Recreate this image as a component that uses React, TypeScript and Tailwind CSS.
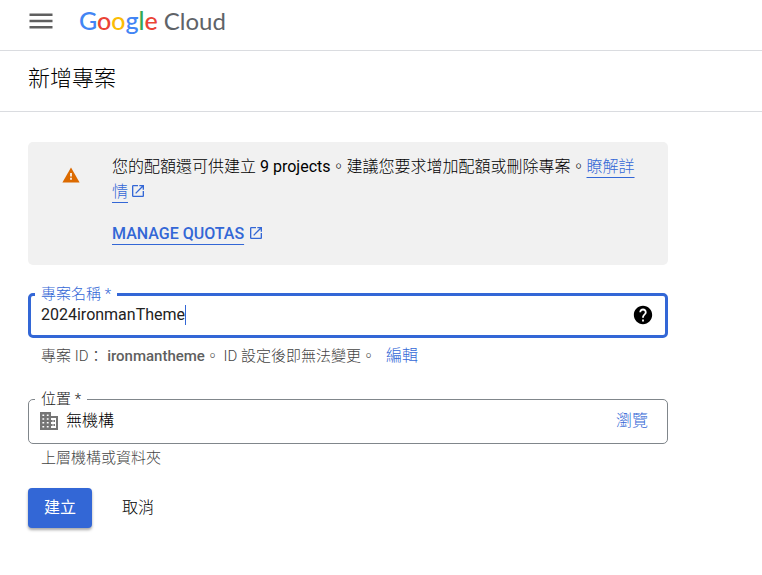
import { MdHelp, MdOpenInNew } from 'react-icons/md';

const logoLetters = [
  { char: 'G', color: 'text-[#4285f4]' },
  { char: 'o', color: 'text-[#ea4335]' },
  { char: 'o', color: 'text-[#fbbc04]' },
  { char: 'g', color: 'text-[#4285f4]' },
  { char: 'l', color: 'text-[#34a853]' },
  { char: 'e', color: 'text-[#ea4335]' },
];

function MenuIcon() {
  return (
    <svg viewBox="0 0 24 16" className="h-4 w-6" fill="currentColor" aria-hidden="true">
      <path d="M0.5 0.5h23v2.4h-23zM0.5 6.8h23v2.4h-23zM0.5 13.1h23v2.4h-23z" />
    </svg>
  );
}

function WarningIcon() {
  return (
    <svg viewBox="0 0 18 16" className="mt-[13px] h-4 w-[18px] shrink-0 text-[#dc6a00]" aria-hidden="true">
      <path d="M9 0.4L17.6 15.6H0.4z" fill="currentColor" />
      <path d="M8 6h2v3.4H8zM8 10.8h2v2H8z" fill="#f8e4d2" />
    </svg>
  );
}

function BuildingIcon() {
  return (
    <svg viewBox="0 0 18 18" className="-ml-px h-[18px] w-[18px] shrink-0 text-[#757575]" aria-hidden="true">
      <path
        fill="currentColor"
        fillRule="evenodd"
        d="M0 0h11v4h7v14H0zM2.4 2.6v1.5h1.8V2.6zM6.8 2.6v1.5h1.8V2.6zM2.4 6.3v1.5h1.8V6.3zM6.8 6.3v1.5h1.8V6.3zM2.4 10.1v1.5h1.8v-1.5zM6.8 10.1v1.5h1.8v-1.5zM2.4 13.9v1.5h1.8v-1.5zM6.8 13.9v1.5h1.8v-1.5zM11 6v2h1.6v2H11v2h1.6v2H11v2h5V6zM13.4 8h1.6v2h-1.6zM13.4 12h1.6v2h-1.6z"
      />
    </svg>
  );
}

function Header() {
  return (
    <header className="flex h-[51px] items-start border-b border-[#dadce0] px-7">
      <button type="button" aria-label="Menu" className="ml-px flex h-[42px] items-center text-[#5f5f5f]">
        <MenuIcon />
      </button>
      <a href="#" className="ml-[26px] flex items-baseline gap-1.5 font-['Lato',sans-serif] text-2xl leading-10 text-[#5f6368]">
        <span className="text-[25px] leading-10 font-medium">
          {logoLetters.map((letter, i) => (
            <span key={i} className={letter.color}>{letter.char}</span>
          ))}
        </span>
        <span>Cloud</span>
      </a>
    </header>
  );
}

function QuotaNotice() {
  return (
    <section className="flex rounded-[5px] bg-[#f1f1f1] pt-3 pr-6 pb-[19px] pl-[34px]">
      <WarningIcon />
      <div className="ml-8 leading-[25px]">
        <p>
          <span className="font-light">您的配額還可供建立</span> 9 projects<span className="font-light">。建議您要求增加配額或刪除專案。</span>
          <a href="#" className="font-light text-[#3367d6] underline underline-offset-[5px]">瞭解詳情</a>
          <MdOpenInNew className="ml-0.5 inline h-4 w-4 align-[-2px] text-[#3367d6]" />
        </p>
        <p className="mt-[17px] font-medium text-[#3367d6]">
          <a href="#" className="underline underline-offset-[5px]">MANAGE QUOTAS</a>
          <MdOpenInNew className="ml-1 inline h-4 w-4 align-[-2px]" />
        </p>
      </div>
    </section>
  );
}

export default function App() {
  return (
    <div className="min-h-screen bg-white font-['Roboto','Noto_Sans_CJK_TC',sans-serif] text-base text-black">
      <Header />
      <h1 className="border-b border-[#dadce0] px-7 pt-3 pb-4 text-[22px] leading-8 font-light">新增專案</h1>

      <main className="max-w-[696px] px-7 pt-[30px] pb-10">
        <QuotaNotice />

        <form onSubmit={(e) => e.preventDefault()}>
          <fieldset className="mt-5 rounded-[5px] border-3 border-[#3367d6] px-1">
            <legend className="px-1.5 text-[15px] leading-[18px] font-light text-[#3367d6]">
              <label htmlFor="project-name">專案名稱 *</label>
            </legend>
            <div className="mb-2 flex h-6 items-center px-1.5">
              <input
                id="project-name"
                type="text"
                defaultValue="2024ironmanTheme"
                className="field-sizing-content max-w-full bg-transparent text-[#222] caret-transparent outline-none"
              />
              <span className="h-5 w-px bg-[#3367d6]" />
              <button type="button" aria-label="說明" className="mr-px ml-auto text-black">
                <MdHelp className="h-[22px] w-[22px]" />
              </button>
            </div>
          </fieldset>
          <p className="mt-2 pl-[13px] text-[15px] leading-5 font-light text-[#444]">
            專案 ID： <span className="font-medium text-[#5f5f5f]">ironmantheme</span>。 ID 設定後即無法變更。
            <button type="button" className="ml-2.5 text-base leading-5 text-[#3367d6]">編輯</button>
          </p>

          <fieldset className="mt-6 rounded-[5px] border border-[#80868b] px-1.5">
            <legend className="px-1.5 text-[15px] leading-[18px] font-light text-[#222]">
              <label htmlFor="location">位置 *</label>
            </legend>
            <div className="mb-2.5 flex h-[25px] items-center px-1.5">
              <BuildingIcon />
              <input
                id="location"
                type="text"
                readOnly
                value="無機構"
                className="ml-2 min-w-0 flex-1 bg-transparent font-light outline-none"
              />
              <button type="button" className="mr-[7px] font-light text-[#3367d6]">瀏覽</button>
            </div>
          </fieldset>
          <p className="mt-1 pl-[13px] text-[15px] leading-5 font-light text-[#444]">上層機構或資料夾</p>

          <div className="mt-5 flex gap-[15px]">
            <button
              type="submit"
              className="h-10 rounded bg-[#3367d6] px-4 text-white shadow-[0_2px_3px_rgba(0,0,0,0.35)]"
            >
              建立
            </button>
            <button type="button" className="h-10 rounded px-[15px] font-light">取消</button>
          </div>
        </form>
      </main>
    </div>
  );
}
